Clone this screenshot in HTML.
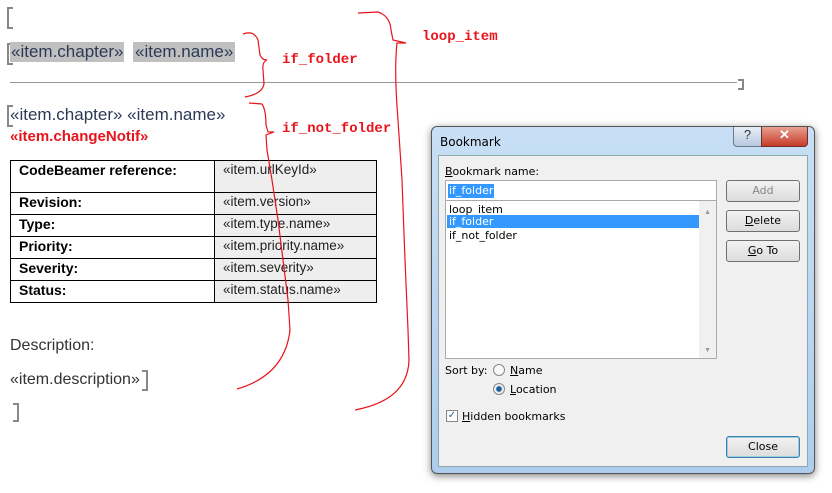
<!DOCTYPE html>
<html><head><meta charset="utf-8"><style>
body{margin:0;width:832px;height:493px;background:#fff;position:relative;overflow:hidden;font-family:"Liberation Sans",sans-serif}
.a{position:absolute}
.m{color:#2b3a55;font-size:17px}
.br{border:2px solid #888;border-right:none;width:4px}
.red{color:#e8141c;font-family:"Liberation Mono",monospace;font-weight:bold;font-size:14px}
table{border-collapse:collapse;position:absolute;left:10px;top:160px;width:367px;font-size:14px}
td{border:1.5px solid #000;padding:1px 0 0 8px;vertical-align:top;height:20px}
td.l{font-weight:bold;width:195px}
td.r{background:#eeeeee;font-size:13.5px;color:#222}
.dlg{left:431px;top:126px;width:382px;height:346px;border-radius:6px;background:linear-gradient(#c8dff5,#aecdee);box-shadow:0 2px 8px rgba(0,0,0,.5);border:1px solid #555}
.in{left:6px;top:28px;width:368px;height:310px;background:#f0f0f0;border:1px solid #8aa}
.d{font-family:"DejaVu Sans",sans-serif;font-size:11px;color:#000}
.btn{position:absolute;width:72px;height:20px;border:1px solid #707070;border-radius:3px;background:linear-gradient(#f2f2f2,#dcdcdc);text-align:center;line-height:20px;font-family:"DejaVu Sans",sans-serif;font-size:11px}
</style></head><body>
<div class="a br" style="left:7px;top:7px;height:18px"></div>
<div class="a br" style="left:7px;top:43px;height:18px"></div>
<div class="a m" style="left:10px;top:42px;background:#c0c0c0;padding:0 1px">«item.chapter»</div>
<div class="a m" style="left:133px;top:42px;background:#c0c0c0;padding:0 2px">«item.name»</div>
<div class="a" style="left:10px;top:82px;width:727px;height:1px;background:#999"></div>
<div class="a" style="left:738px;top:79px;width:4px;height:7px;border:2px solid #888;border-left:none"></div>
<div class="a br" style="left:7px;top:105px;height:18px"></div>
<div class="a m" style="left:10px;top:105px">«item.chapter» «item.name»</div>
<div class="a" style="left:10px;top:128px;color:#e8141c;font-weight:bold;font-size:15px">«item.changeNotif»</div>
<table>
<tr><td class="l" style="height:30px">CodeBeamer reference:</td><td class="r">«item.urlKeyId»</td></tr>
<tr><td class="l">Revision:</td><td class="r">«item.version»</td></tr>
<tr><td class="l">Type:</td><td class="r">«item.type.name»</td></tr>
<tr><td class="l">Priority:</td><td class="r">«item.priority.name»</td></tr>
<tr><td class="l">Severity:</td><td class="r">«item.severity»</td></tr>
<tr><td class="l">Status:</td><td class="r">«item.status.name»</td></tr>
</table>
<div class="a" style="left:10px;top:337px;font-size:16px;color:#333">Description:</div>
<div class="a" style="left:10px;top:371px;font-size:16px;color:#333">«item.description»</div>
<div class="a" style="left:142px;top:370px;width:4px;height:17px;border:2px solid #888;border-left:none"></div>
<div class="a" style="left:13px;top:403px;width:4px;height:15px;border:2px solid #888;border-left:none"></div>
<div class="a red" style="left:282px;top:52px">if_folder</div>
<div class="a red" style="left:282px;top:121px">if_not_folder</div>
<div class="a red" style="left:422px;top:29px">loop_item</div>
<svg class="a" style="left:0;top:0" width="832" height="493"><g fill="none" stroke="#e8141c" stroke-width="1.2">
<path d="M243 34 Q254 30 258 40 L260 55 Q262 60 267 60 Q262 62 263 70 L264 84 Q262 94 245 97"/>
<path d="M358 13 L378 12 Q390 16 391 30 L393 40 L406 43 L397 43 Q394 70 398 120 L402 180 L405 260 L408 330 L409 360 Q408 400 355 410"/>
<path d="M249 103 L262 104 Q266 110 266 125 L268 132 L274 132 L266 135 L267 150 L272 180 L278 220 L288 300 L290 330 Q285 375 237 389"/>
</g></svg>
<div class="a dlg">
<div class="a d" style="left:8px;top:8px;font-size:12px">Bookmark</div>
<div class="a" style="left:301px;top:0;width:27px;height:19px;border:1px solid #6a7a90;border-top:none;border-radius:0 0 0 4px;background:linear-gradient(#e6eef8,#b8c8dc);text-align:center;font-size:13px;color:#333">?</div>
<div class="a" style="left:329px;top:0;width:45px;height:19px;border:1px solid #6a3030;border-top:none;border-radius:0 0 4px 0;background:linear-gradient(#e8a090,#c83a28);text-align:center;color:#fff;font-weight:bold;font-size:13px">✕</div>
<div class="a in">
<div class="a d" style="left:6px;top:9px"><u>B</u>ookmark name:</div>
<div class="a" style="left:6px;top:24px;width:270px;height:19px;border:1px solid #aaa;background:#fff"><span class="d" style="background:#3399ff;color:#fff;margin:2px;display:inline-block;padding:0 1px;line-height:14px;margin-top:3px">if_folder</span></div>
<div class="a" style="left:6px;top:44px;width:270px;height:157px;border:1px solid #aaa;background:#fff">
<div class="d" style="position:absolute;left:3px;top:2px">loop_item</div>
<div class="d" style="position:absolute;left:1px;top:14px;width:250px;height:13px;background:#3399ff;color:#fff;padding-left:2px">if_folder</div>
<div class="d" style="position:absolute;left:3px;top:28px">if_not_folder</div>
<div style="position:absolute;right:0;top:0;width:17px;height:157px;background:#f0f0f0"></div>
<div style="position:absolute;right:5px;top:8px;font-size:7px;color:#999">▲</div>
<div style="position:absolute;right:5px;bottom:4px;font-size:7px;color:#999">▼</div>
</div>
<div class="btn" style="left:287px;top:24px;color:#888">Add</div>
<div class="btn" style="left:287px;top:54px"><u>D</u>elete</div>
<div class="btn" style="left:287px;top:84px"><u>G</u>o To</div>
<div class="a d" style="left:6px;top:208px">Sort by:</div>
<div class="a" style="left:54px;top:208px;width:10px;height:10px;border:1px solid #888;border-radius:50%;background:#f8f8f8"></div>
<div class="a d" style="left:71px;top:208px"><u>N</u>ame</div>
<div class="a" style="left:54px;top:227px;width:10px;height:10px;border:1px solid #888;border-radius:50%;background:radial-gradient(#1a5fa0 35%,#eee 45%)"></div>
<div class="a d" style="left:71px;top:227px"><u>L</u>ocation</div>
<div class="a" style="left:7px;top:254px;width:10px;height:10px;border:1px solid #888;background:#fff;font-size:10px;line-height:10px;color:#2a5aa8;text-align:center">✓</div>
<div class="a d" style="left:23px;top:254px"><u>H</u>idden bookmarks</div>
<div class="btn" style="left:287px;top:280px;border-color:#3c7fb1;box-shadow:inset 0 0 0 1px #9cd">Close</div>
</div></div>
</body></html>
